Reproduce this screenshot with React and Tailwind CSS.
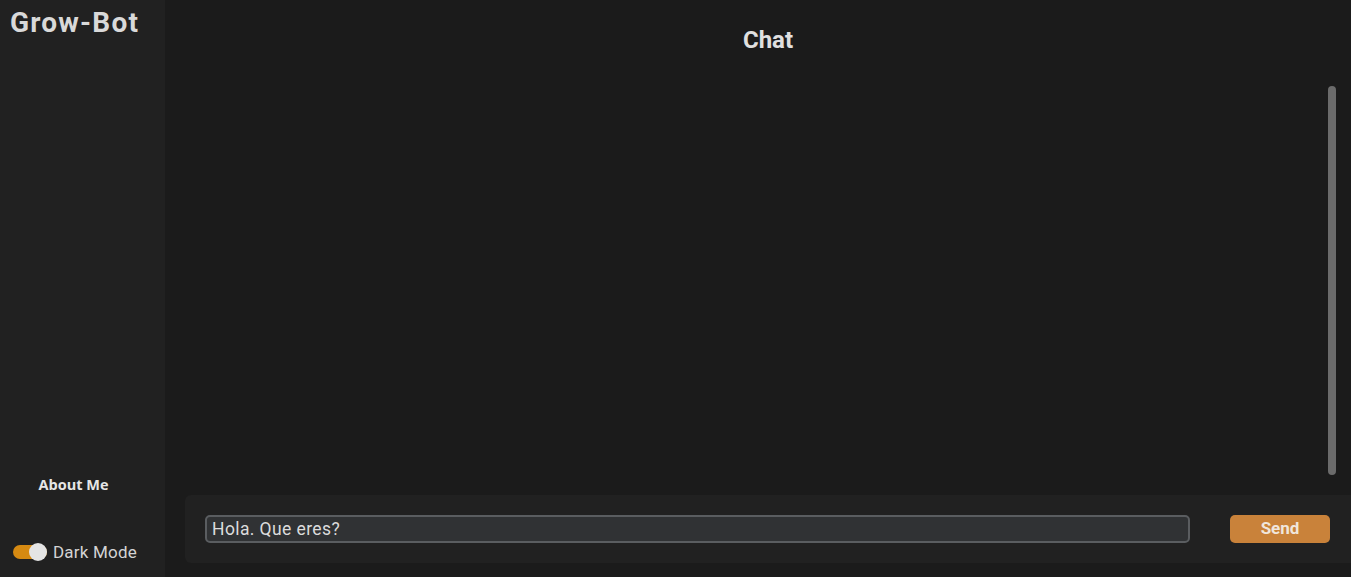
import React, { useState } from "react";

export default function App() {
  const [msg, setMsg] = useState("Hola. Que eres?");
  const [dark, setDark] = useState(true);

  return (
    <div
      className="flex h-[577px] w-full overflow-hidden bg-[#1b1b1b] text-[#dcdcdc]"
      style={{ fontFamily: "Roboto, 'Liberation Sans', sans-serif" }}
    >
      {/* sidebar */}
      <aside className="flex w-[165px] shrink-0 flex-col bg-[#212121] px-[10px]">
        <h1 className="mt-[5px] text-[28px] font-bold leading-[36px] tracking-[1.2px] text-[#d9d9d9]">
          Grow-Bot
        </h1>
        <div className="flex-1" />
        <button
          className="mb-[44px] self-center pr-[18px] text-[14.5px] font-bold text-[#e6e6e6]"
          style={{ fontFamily: "'Open Sans', sans-serif" }}
        >
          About Me
        </button>
        <label className="mb-[12px] ml-[3px] flex items-center gap-[6px]">
          <button
            onClick={() => setDark(!dark)}
            className="relative h-[14px] w-[34px] rounded-full bg-[#d68a12]"
          >
            <span className="absolute right-0 top-[-2px] h-[18px] w-[18px] rounded-full bg-[#e4e4e4]" />
          </button>
          <span className="text-[17px] tracking-[0.2px] text-[#d4d4d4]">Dark Mode</span>
        </label>
      </aside>

      {/* main */}
      <main className="flex min-w-0 flex-1 flex-col pl-[20px]">
        <h2 className="mt-[25px] text-center text-[24px] font-bold leading-[30px] text-[#e0e0e0]">
          Chat
        </h2>
        <div className="flex flex-1 justify-end pt-[31px] pb-[20px] pr-[15px]">
          <div className="h-full w-[8px] rounded-full bg-[#6b6b6b]" />
        </div>
        <div className="mb-[14px] flex items-center gap-[40px] rounded-l-[6px] bg-[#212121] py-[20px] pl-[20px] pr-[21px]">
          <input
            value={msg}
            onChange={(e) => setMsg(e.target.value)}
            className="h-[28px] flex-1 rounded-[5px] border-2 border-[#5a5d60] bg-[#303234] px-[5px] text-[17.5px] tracking-[0.4px] text-[#dcdcdc] outline-none"
          />
          <button className="h-[28px] w-[100px] rounded-[5px] bg-[#c9823a] text-[17px] font-bold text-[#f0e6dc]">
            Send
          </button>
        </div>
      </main>
    </div>
  );
}
